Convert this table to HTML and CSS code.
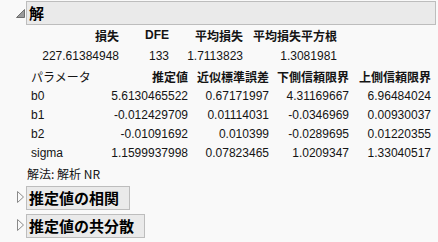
FILE: index.html
```html
<!DOCTYPE html>
<html lang="ja">
<head>
<meta charset="utf-8">
<link rel="stylesheet" href="styles.css">
</head>
<body>
<div class="outline open">
  <div class="head-row">
    <svg class="tri" width="26" height="24" viewBox="0 0 26 24"><polygon points="16.5,16.5 24.5,8.5 24.5,16.5" fill="#9a9a9a" stroke="#6e6e6e" stroke-width="1"/></svg>
    <div class="bar full">解</div>
  </div>
  <div class="content">
    <div class="t1">
      <div class="h">損失</div><div class="h">DFE</div><div class="h">平均損失</div><div class="h">平均損失平方根</div>
      <div>227.61384948</div><div>133</div><div>1.7113823</div><div>1.3081981</div>
    </div>
    <div class="t2">
      <div class="h l">パラメータ</div><div class="h">推定値</div><div class="h">近似標準誤差</div><div class="h">下側信頼限界</div><div class="h">上側信頼限界</div>
      <div class="l">b0</div><div>5.6130465522</div><div>0.67171997</div><div>4.31169667</div><div>6.96484024</div>
      <div class="l">b1</div><div>-0.012429709</div><div>0.01114031</div><div>-0.0346969</div><div>0.00930037</div>
      <div class="l">b2</div><div>-0.01091692</div><div>0.010399</div><div>-0.0289695</div><div>0.01220355</div>
      <div class="l">sigma</div><div>1.1599937998</div><div>0.07823465</div><div>1.0209347</div><div>1.33040517</div>
    </div>
    <div class="note">解法: 解析 NR</div>
  </div>
</div>
<div class="outline closed">
  <div class="head-row">
    <svg class="tri" width="26" height="24" viewBox="0 0 26 24"><polygon points="17.5,5.5 23.5,11 17.5,16.5" fill="#fafafa" stroke="#8a8a8a" stroke-width="1"/></svg>
    <div class="bar">推定値の相関</div>
  </div>
</div>
<div class="outline closed">
  <div class="head-row">
    <svg class="tri" width="26" height="24" viewBox="0 0 26 24"><polygon points="17.5,5.5 23.5,11 17.5,16.5" fill="#fafafa" stroke="#8a8a8a" stroke-width="1"/></svg>
    <div class="bar">推定値の共分散</div>
  </div>
</div>
</body>
</html>
```
FILE: styles.css
```css
html, body {
  margin: 0;
  padding: 0;
  background: #f9f9f9;
}
body {
  font-family: "Liberation Sans", "Noto Sans CJK JP", sans-serif;
  font-size: 12px;
  color: #141414;
  width: 438px;
  height: 242px;
  overflow: hidden;
}
.open {
  padding-top: 1px;
}
.closed {
  margin-top: 4px;
}
.content + .x {}
.open + .closed {
  margin-top: 2px;
}
.head-row {
  display: flex;
  align-items: flex-start;
  height: 24px;
}
.tri {
  flex: none;
  display: block;
}
.bar {
  box-sizing: border-box;
  height: 24px;
  border: 1px solid #bdbdbd;
  background: #eaeaea;
  font-family: "Noto Sans CJK JP", "Liberation Sans", sans-serif;
  font-weight: bold;
  font-size: 15px;
  line-height: 22px;
  padding: 0 10px 0 2px;
  color: #000;
}
.bar.full {
  width: 410px;
}
.content {
  padding-left: 31px;
}
.t1 {
  display: grid;
  grid-template-columns: 88px 50px 74px 94px;
  grid-auto-rows: 21px;
  line-height: 21px;
  text-align: right;
  white-space: nowrap;
}
.t2 {
  display: grid;
  grid-template-columns: 80px 77px 81px 80px 82px;
  grid-template-rows: 20px;
  grid-auto-rows: 19px;
  line-height: 19px;
  text-align: right;
  white-space: nowrap;
}
.t2 .h {
  line-height: 20px;
}
.h {
  font-family: "Noto Sans CJK JP", "Liberation Sans", sans-serif;
  font-weight: bold;
}
.t1 .h:nth-child(2) {
  font-family: "Liberation Sans", sans-serif;
}
.l {
  text-align: left;
}
.t2 .h.l {
  font-weight: normal;
}
.note {
  margin-left: -4px;
  height: 21px;
  line-height: 21px;
  font-family: "Noto Sans CJK JP", "Liberation Sans", sans-serif;
}
```
